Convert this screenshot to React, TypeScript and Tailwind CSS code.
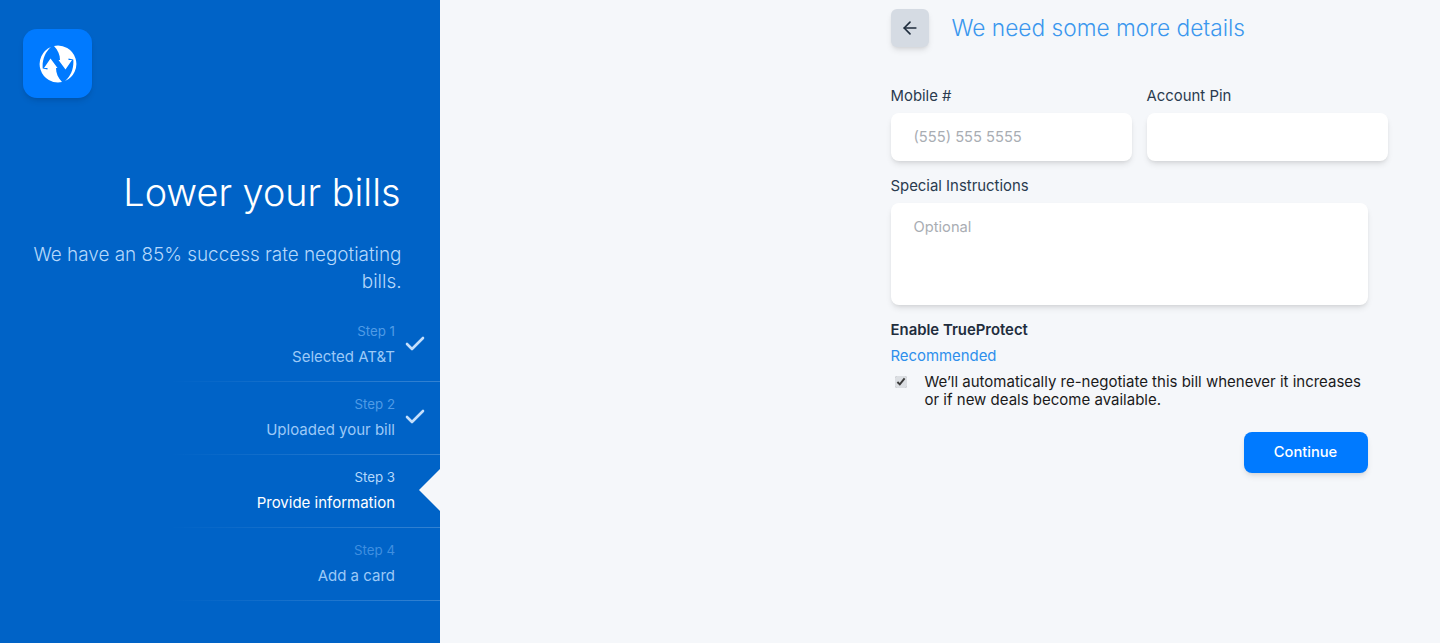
import { ArrowLeft, Check } from "lucide-react";

const steps = [
  { label: "Step 1", title: "Selected AT&T", state: "done" },
  { label: "Step 2", title: "Uploaded your bill", state: "done" },
  { label: "Step 3", title: "Provide information", state: "current" },
  { label: "Step 4", title: "Add a card", state: "todo" },
];

function Logo() {
  const swirl =
    "M13 2.9A18.5 18.5 0 0 0 24 38.06C20 34 18 29 18 24L19.5 24L12.5 14.5L6 24L9.5 24L9.5 25.5L4.7 24.5C4 16 7 8 13 2.9Z";
  return (
    <svg viewBox="0 0 40 40" className="h-10 w-10" fill="#fff">
      <path d={swirl} />
      <path d={swirl} transform="rotate(180 20 20)" />
    </svg>
  );
}

function Step({ label, title, state }: { label: string; title: string; state: string }) {
  return (
    <div className="relative h-[73px] pr-[44.5px] pt-[12px] text-right">
      <p
        className={
          "text-[13.3px] leading-[20px] " +
          (state === "current" ? "text-[#b5d8fb]" : state === "done" ? "text-[#4f9be6]" : "text-[#3f8fe0]")
        }
      >
        {label}
      </p>
      <p
        className={
          "mt-[5px] text-[15px] leading-[22px] " +
          (state === "current" ? "text-white" : "text-[#9cc9f7]")
        }
      >
        {title}
      </p>
      {state === "done" && (
        <Check className="absolute right-[12.5px] top-[23px] h-[24px] w-[24px] text-[#c4dffb]" strokeWidth={2.6} />
      )}
      {state === "current" && (
        <div className="absolute right-0 top-[14px] h-0 w-0 border-y-[21px] border-r-[21px] border-y-transparent border-r-[#f5f7fa]" />
      )}
      <div className="absolute bottom-0 left-[170px] right-0 h-px bg-gradient-to-r from-transparent to-white/20" />
    </div>
  );
}

export default function App() {
  return (
    <div className="flex h-[643px] w-[1440px] overflow-hidden bg-[#f5f7fa] font-['Inter',sans-serif]">
      {/* Sidebar */}
      <aside className="w-[439.5px] shrink-0 bg-[#0063c7] pt-[29px]">
        <div className="ml-[23px] flex h-[69px] w-[69px] items-center justify-center rounded-[14px] bg-[#007aff] shadow-md">
          <Logo />
        </div>
        <h1 className="mr-[39px] mt-[69px] text-right text-[37.8px] font-light leading-[50px] text-white">
          Lower your bills
        </h1>
        <p className="ml-[30px] mr-[38px] mt-[24px] text-right text-[18.9px] font-light leading-[27px] text-[#b5d8fb]">
          We have an 85% success rate negotiating bills.
        </p>
        <div className="mt-[14px]">
          {steps.map((s) => (
            <Step key={s.label} {...s} />
          ))}
        </div>
      </aside>

      {/* Form */}
      <main className="ml-[451px] w-[497px] pt-[9px]">
        <div className="flex items-center">
          <button className="flex h-[38px] w-[38px] items-center justify-center rounded-md bg-[#d5dbe3] text-[#1f2d3d] shadow-md">
            <ArrowLeft className="h-[20px] w-[20px]" strokeWidth={2} />
          </button>
          <h2 className="ml-[23px] text-[22.7px] font-light leading-[36px] text-[#3b97ee]">We need some more details</h2>
        </div>

        <div className="mt-[37px] flex gap-[15px]">
          <label className="block w-[241px]">
            <span className="block text-[14.9px] leading-[24px] text-[#2a3b4f]">Mobile #</span>
            <input
              placeholder="(555) 555 5555"
              className="mt-[5px] h-[48px] w-full rounded-lg bg-white px-[23px] text-[14.7px] shadow-md placeholder:text-[#a9adb3]"
            />
          </label>
          <label className="block w-[241px]">
            <span className="block text-[14.9px] leading-[24px] text-[#2a3b4f]">Account Pin</span>
            <input className="mt-[5px] h-[48px] w-full rounded-lg bg-white px-[23px] text-[14.7px] shadow-md" />
          </label>
        </div>

        <label className="mt-[13px] block w-[477px]">
          <span className="block text-[14.9px] leading-[24px] text-[#2a3b4f]">Special Instructions</span>
          <textarea
            placeholder="Optional"
            className="mt-[5px] block h-[102px] w-full resize-none rounded-lg bg-white px-[23px] py-[13px] text-[14.7px] leading-[22px] shadow-md placeholder:text-[#a9adb3]"
          />
        </label>

        <p className="mt-[13px] text-[14.9px] font-semibold leading-[24px] text-[#1f2d3d]">Enable TrueProtect</p>
        <p className="mt-[2px] text-[14.9px] leading-[24px] text-[#2f8fec]">Recommended</p>
        <div className="mt-[5px] flex w-[477px]">
          <input
            type="checkbox"
            defaultChecked
            className="ml-[4px] mt-[3px] h-[12px] w-[12px] shrink-0 accent-[#dcdfe3]"
          />
          <p className="ml-[18px] text-[15px] leading-[18px] text-[#1a1a1a]">
            We’ll automatically re-negotiate this bill whenever it increases or if new deals become available.
          </p>
        </div>

        <div className="mt-[23px] flex w-[477px] justify-end">
          <button className="h-[41px] w-[124px] rounded-lg bg-[#007aff] text-[14.7px] font-medium text-white shadow-md">
            Continue
          </button>
        </div>
      </main>
    </div>
  );
}
